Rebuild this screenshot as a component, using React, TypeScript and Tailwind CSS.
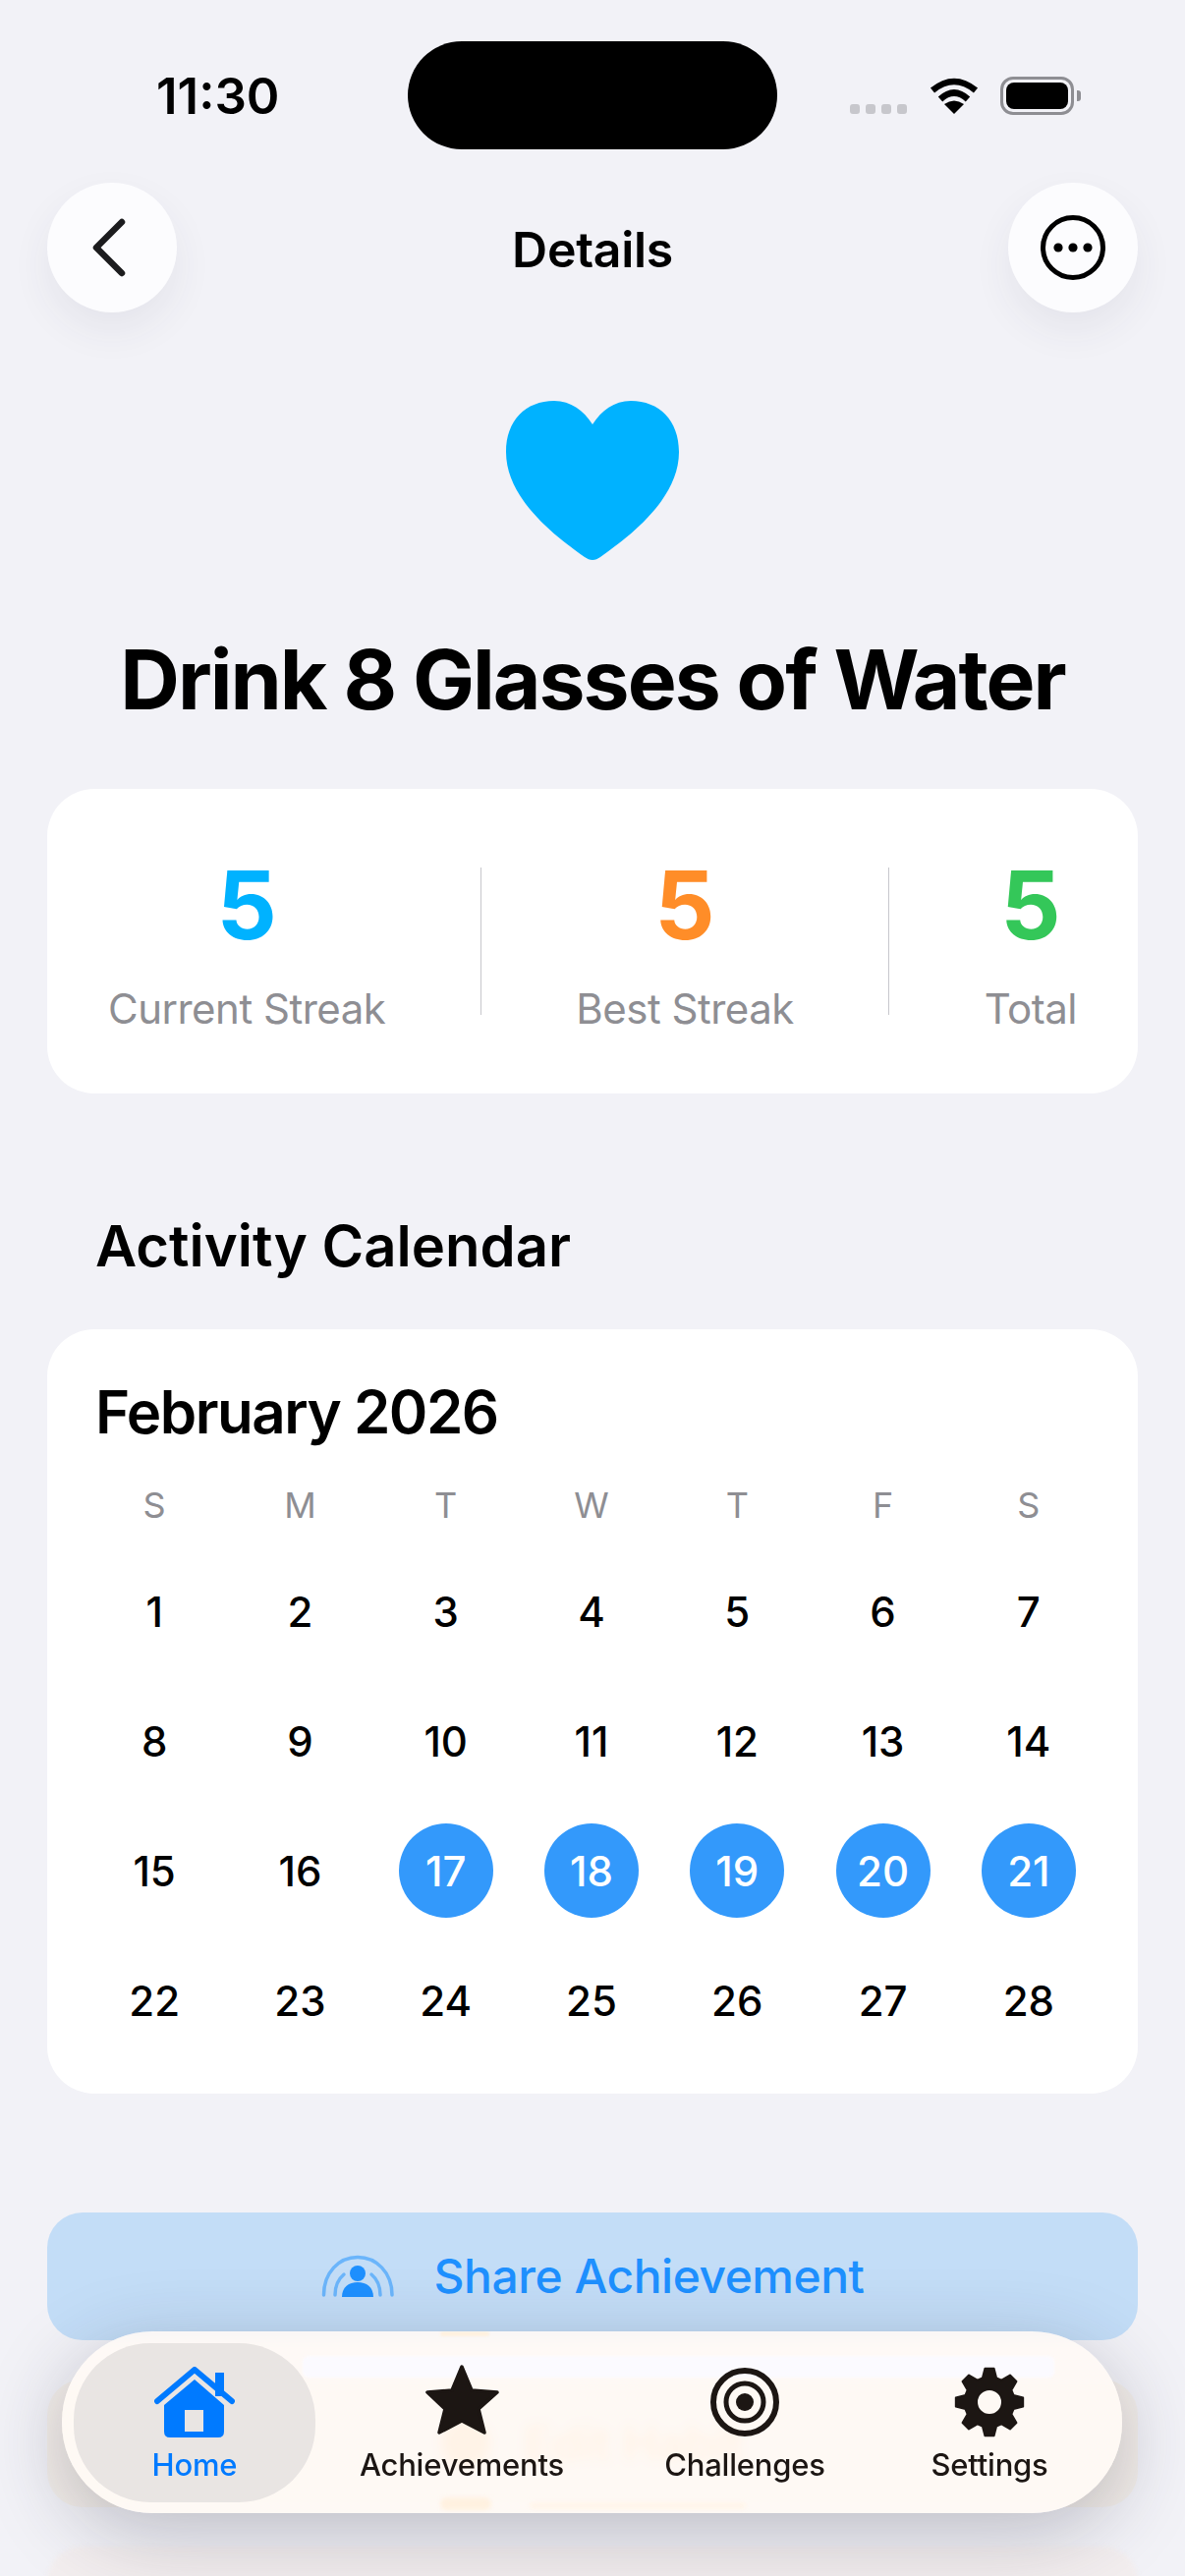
const weekDays = ["S", "M", "T", "W", "T", "F", "S"]
const days = Array.from({ length: 28 }, (_, i) => i + 1)
const doneDays = [17, 18, 19, 20, 21]

// 8 tooth gear, drawn around the centre of a 72 box
function gearPath() {
  const pts: string[] = []
  for (let i = 0; i < 8; i++) {
    const a = (i * Math.PI) / 4 - Math.PI / 2
    const step = Math.PI / 4
    const list: [number, number][] = [
      [25.5, a - step * 0.36],
      [34.5, a - step * 0.17],
      [34.5, a + step * 0.17],
      [25.5, a + step * 0.36],
    ]
    for (const [r, t] of list) {
      pts.push(`${(36 + r * Math.cos(t)).toFixed(2)} ${(36 + r * Math.sin(t)).toFixed(2)}`)
    }
  }
  return `M${pts.join("L")}Z`
}

function StatusBar() {
  return (
    <div className="mt-[42px] flex h-[110px] pl-[159px]">
      <div className="w-[256px] pt-[27px] text-[51px] leading-[58px] font-semibold text-black">11:30</div>
      <div className="h-[110px] w-[376px] rounded-[55px] bg-black" />
      <div className="relative flex pl-[74px] pt-[36px]">
        <div className="mt-[28px] flex h-[10px] gap-[6px]">
          <span className="h-[10px] w-[10px] rounded-[3px] bg-[#c7c7cc]" />
          <span className="h-[10px] w-[10px] rounded-[3px] bg-[#c7c7cc]" />
          <span className="h-[10px] w-[10px] rounded-[3px] bg-[#c7c7cc]" />
          <span className="h-[10px] w-[10px] rounded-[3px] bg-[#c7c7cc]" />
        </div>
        <svg width="50" height="37" viewBox="0 0 50 37" className="ml-[23px] mt-[1px]">
          <path d="M3 13Q25 -5 47 13" fill="none" stroke="#000" strokeWidth="6.5" />
          <path d="M11 22Q25 9 39 22" fill="none" stroke="#000" strokeWidth="6.5" />
          <path d="M25 37L15 27Q25 20 35 27Z" fill="#000" />
        </svg>
        <div className="ml-[22px] flex h-[39px] w-[75px] items-center justify-center rounded-[13px] border-[3px] border-[#8e8e93]">
          <div className="h-[27px] w-[63px] rounded-[8px] bg-black" />
        </div>
        <div className="ml-[3px] mt-[14px] h-[11px] w-[4px] rounded-r-[3px] bg-[#8e8e93]" />
      </div>
    </div>
  )
}

function NavBar() {
  return (
    <div className="mt-[34px] flex h-[132px] items-center justify-between px-[48px]">
      <button className="flex h-[132px] w-[132px] items-center justify-center rounded-full bg-[#fcfcfe] shadow-[0_18px_40px_rgba(60,60,80,0.07)]">
        <svg width="40" height="64" viewBox="0 0 40 64" className="mr-[6px]">
          <path d="M33 6L7 32L33 58" fill="none" stroke="#1c1c1e" strokeWidth="6.5" strokeLinecap="round" strokeLinejoin="round" />
        </svg>
      </button>
      <div className="pt-[3px] text-[50px] leading-[60px] font-semibold tracking-[-0.3px] text-black">Details</div>
      <button className="flex h-[132px] w-[132px] items-center justify-center rounded-full bg-[#fcfcfe] shadow-[0_18px_40px_rgba(60,60,80,0.07)]">
        <svg width="66" height="66" viewBox="0 0 66 66">
          <circle cx="33" cy="33" r="30.5" fill="none" stroke="#000" strokeWidth="5" />
          <circle cx="18" cy="33" r="4.6" fill="#000" />
          <circle cx="33" cy="33" r="4.6" fill="#000" />
          <circle cx="48" cy="33" r="4.6" fill="#000" />
        </svg>
      </button>
    </div>
  )
}

function Stat({ value, label, color }: { value: string; label: string; color: string }) {
  return (
    <div className="flex flex-col items-center">
      <div className={`text-[96px] leading-[96px] font-bold ${color}`}>{value}</div>
      <div className="mt-[33px] text-[42px] leading-[50px] tracking-[-0.5px] text-[#8e8e93]">{label}</div>
    </div>
  )
}

function Calendar() {
  return (
    <div className="mx-[48px] mt-[50px] rounded-[48px] bg-white pb-[29px] pl-[35px] pr-[37px] pt-[48px]">
      <div className="pl-[14px] text-[60px] leading-[72px] font-semibold tracking-[-1.5px] text-black">February 2026</div>
      <div className="mt-[36px] grid grid-cols-7">
        {weekDays.map((d, i) => (
          <div key={i} className="text-center text-[36px] leading-[46px] text-[#8e8e93]">
            {d}
          </div>
        ))}
      </div>
      <div className="mt-[19px] grid grid-cols-7">
        {days.map((d) => (
          <div key={d} className="flex h-[132px] items-center justify-center">
            <div
              className={
                doneDays.includes(d)
                  ? "flex h-[96px] w-[96px] items-center justify-center rounded-full bg-[#3399fb] text-[42px] font-[450] text-white"
                  : "text-[42px] font-[450] text-black"
              }
            >
              {d}
            </div>
          </div>
        ))}
      </div>
    </div>
  )
}

function TabBar() {
  return (
    <div className="absolute left-[63px] top-[2373px] grid h-[185px] w-[1079px] grid-cols-[246px_298px_278px_220px] items-center overflow-hidden rounded-[92px] bg-[#fff9f5]/90 pl-[12px] shadow-[0_20px_80px_rgba(40,40,60,0.27)] backdrop-blur-[6px]">
      <div className="absolute left-[245px] top-[25px] h-[22px] w-[765px] rounded-[6px] bg-[#fbfaff] blur-[1px]" />
      <div className="absolute left-[385px] top-[169px] h-[13px] w-[52px] rounded-full bg-[#fff1e0] blur-[2px]" />
      <div className="absolute left-[385px] top-[0px] h-[5px] w-[50px] rounded-full bg-[#fff1e0] blur-[1px]" />
      <div className="absolute left-[476px] top-[174px] h-[7px] w-[220px] rounded-full bg-[#fff5ea] blur-[2px]" />
      <div className="relative flex h-[162px] flex-col items-center rounded-[78px] bg-[#e9e5e3]">
        <svg width="82" height="72" viewBox="0 0 82 72" className="mt-[24px]">
          <path d="M62 6h9v24h-9z" fill="#007aff" />
          <path d="M3 35L41 3L79 35" fill="none" stroke="#007aff" strokeWidth="6" strokeLinecap="round" strokeLinejoin="round" />
          <path
            fillRule="evenodd"
            d="M10 39L41 13L71 39V66Q71 72 65 72H16Q10 72 10 66ZM31 44V66H50V44Z"
            fill="#007aff"
          />
        </svg>
        <span className="mt-[9px] text-[31px] leading-[38px] font-medium tracking-[-0.2px] text-[#007aff]">Home</span>
      </div>
      <div className="relative flex h-[162px] flex-col items-center">
        <svg width="77" height="73" viewBox="0 0 77 73" className="mt-[21px]">
          <path
            d="M38 3L48 27L74 29L55 46L61 70L38 58L15 70L21 46L3 29L28 27Z"
            fill="#1c1613"
            stroke="#1c1613"
            strokeWidth="3.5"
            strokeLinejoin="round"
          />
        </svg>
        <span className="mt-[11px] text-[31px] leading-[38px] font-medium tracking-[-0.2px] text-[#1c1613]">Achievements</span>
      </div>
      <div className="relative flex h-[162px] flex-col items-center">
        <svg width="70" height="70" viewBox="0 0 70 70" className="mt-[25px]">
          <circle cx="35" cy="35" r="32" fill="none" stroke="#1c1613" strokeWidth="6" />
          <circle cx="35" cy="35" r="19" fill="none" stroke="#1c1613" strokeWidth="5" />
          <circle cx="35" cy="35" r="9" fill="#1c1613" />
        </svg>
        <span className="mt-[10px] text-[31px] leading-[38px] font-medium tracking-[-0.2px] text-[#1c1613]">Challenges</span>
      </div>
      <div className="relative flex h-[162px] flex-col items-center">
        <svg width="72" height="72" viewBox="0 0 72 72" className="mt-[24px]">
          <path
            fillRule="evenodd"
            d={`${gearPath()}M36 23a13 13 0 1 0 0 26a13 13 0 1 0 0 -26Z`}
            fill="#1c1613"
            stroke="#1c1613"
            strokeWidth="2"
            strokeLinejoin="round"
          />
        </svg>
        <span className="mt-[9px] text-[31px] leading-[38px] font-medium tracking-[-0.2px] text-[#1c1613]">Settings</span>
      </div>
    </div>
  )
}

export default function App() {
  return (
    <div className="relative h-[2622px] w-[1206px] overflow-hidden bg-[#f2f2f7] font-['Inter',sans-serif]">
      <StatusBar />
      <NavBar />

      <svg width="176" height="162" viewBox="0 0 176 162" className="mx-auto mt-[90px]">
        <path
          d="M88 162C85 162 83 161 80 159C55 141 0 102 0 52C0 20 20 0 49 0C66 0 79 10 88 24C97 10 110 0 127 0C156 0 176 20 176 52C176 102 121 141 96 159C93 161 91 162 88 162Z"
          fill="#00b2ff"
        />
      </svg>

      <h1 className="mt-[72px] text-center text-[84px] leading-[100px] font-bold tracking-[-2px] text-black">Drink 8 Glasses of Water</h1>

      <div className="mx-[48px] mt-[61px] flex h-[310px] justify-between rounded-[48px] bg-white px-[62px] pt-[70px]">
        <Stat value="5" label="Current Streak" color="text-[#00b2ff]" />
        <div className="mt-[10px] h-[150px] w-px bg-[#c7c7cc]" />
        <Stat value="5" label="Best Streak" color="text-[#ff8d28]" />
        <div className="mt-[10px] h-[150px] w-px bg-[#c7c7cc]" />
        <Stat value="5" label="Total" color="text-[#34c759]" />
      </div>

      <h2 className="mt-[120px] pl-[97px] text-[58px] leading-[70px] font-semibold text-black">Activity Calendar</h2>
      <Calendar />

      <div className="mx-[48px] mt-[121px] flex flex-col gap-[40px]">
        <button className="flex h-[130px] items-center justify-center gap-[40px] rounded-[36px] bg-[#c3ddf7] text-[#1e90ff]">
          <svg width="75" height="44" viewBox="0 0 75 44" fill="none">
            <circle cx="37" cy="19" r="8" fill="#1e90ff" />
            <path d="M21 43C21 33 28 28 37 28C46 28 53 33 53 43Z" fill="#1e90ff" />
            <path d="M2.5 41C2.5 18 18 2.5 37 2.5C56 2.5 72 18 72 41" stroke="#6bb5fb" strokeWidth="3.5" strokeLinecap="round" />
            <path d="M14 41C14 32 17 25 23 20M60 41C60 32 57 25 51 20" stroke="#6bb5fb" strokeWidth="3.5" strokeLinecap="round" />
          </svg>
          <span className="text-[48px] leading-[58px] font-medium tracking-[-0.5px]">Share Achievement</span>
        </button>
        <button className="flex h-[130px] items-center justify-center gap-[34px] rounded-[36px] bg-[#f3eeea] text-[#ffb866]">
          <div className="h-[50px] w-[50px] rounded-full bg-[#ffb866]" />
          <span className="text-[48px] leading-[58px] font-semibold">Edit Habit</span>
        </button>
        <div className="h-[130px] rounded-[36px] bg-[#f3eeef] blur-[2px]" />
      </div>

      <TabBar />
    </div>
  )
}
